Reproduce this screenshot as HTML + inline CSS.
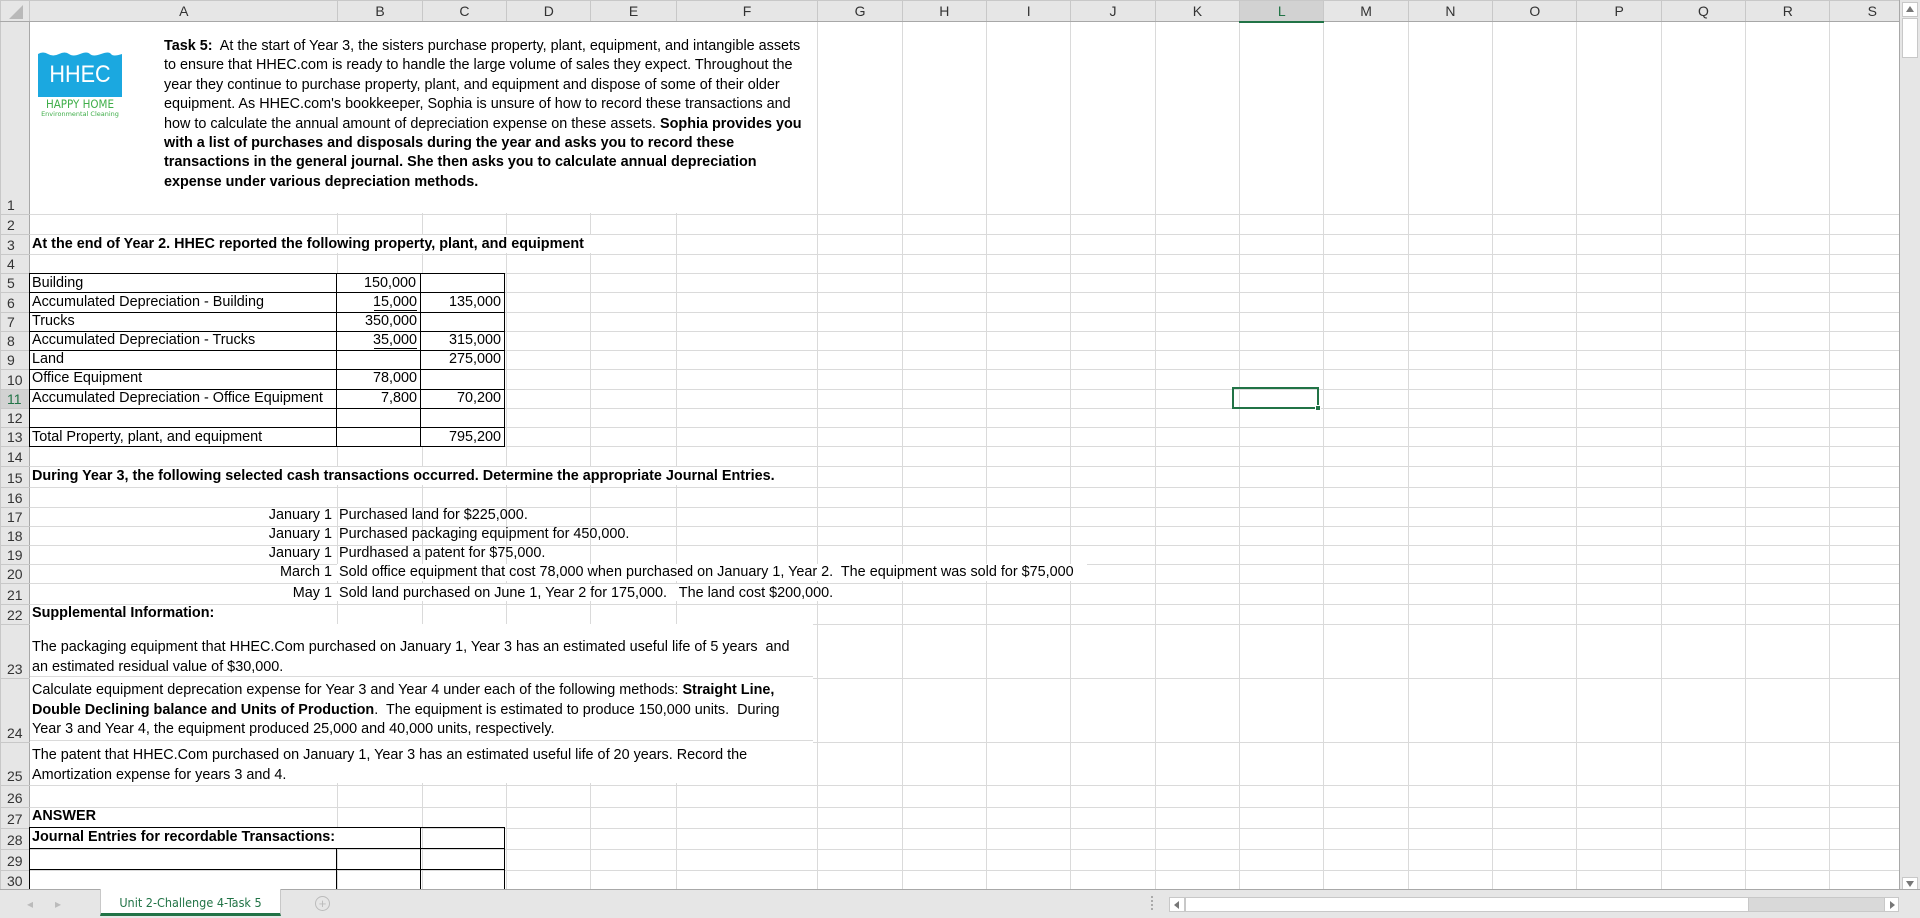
<!DOCTYPE html>
<html><head><meta charset="utf-8"><style>
*{margin:0;padding:0;box-sizing:border-box}
body{width:1920px;height:918px;overflow:hidden;background:#fff;font-family:"Liberation Sans",Arial,sans-serif;position:relative}
table.g{position:absolute;left:0;top:0;border-collapse:collapse;table-layout:fixed;width:1915px}
table.g td{border:1px solid #dadada;padding:0}
table.g tr.h td{background:#e6e6e6;border-color:#c8c8c8;border-bottom:1px solid #a8a8a8;text-align:center;font-size:14px;color:#333;vertical-align:middle}
table.g td.rh{background:#e6e6e6;border-color:#c8c8c8;border-right:1px solid #a8a8a8;font-size:14px;color:#333;text-align:left;padding-left:6px;vertical-align:bottom;line-height:17px}
.t{position:absolute;font-size:14.4px;line-height:19px;white-space:nowrap;color:#000}
.b{font-weight:bold}
.bx{position:absolute;border:1px solid #000}
.r{text-align:right}
</style></head><body>
<table class="g">
<colgroup><col style="width:29px"><col style="width:307px"><col style="width:84px"><col style="width:84px"><col style="width:84px"><col style="width:85px"><col style="width:141px"><col style="width:84px"><col style="width:84px"><col style="width:84px"><col style="width:84px"><col style="width:84px"><col style="width:84px"><col style="width:84px"><col style="width:84px"><col style="width:84px"><col style="width:84px"><col style="width:84px"><col style="width:84px"><col style="width:84px"></colgroup>
<tr class="h" style="height:21px"><td style="background:#e6e6e6"></td><td>A</td><td>B</td><td>C</td><td>D</td><td>E</td><td>F</td><td>G</td><td>H</td><td>I</td><td>J</td><td>K</td><td style="background:#d2d2d2;color:#217346;border-bottom:2px solid #217346">L</td><td>M</td><td>N</td><td>O</td><td>P</td><td>Q</td><td>R</td><td>S</td></tr>
<tr style="height:193px"><td class="rh">1</td><td></td><td></td><td></td><td></td><td></td><td></td><td></td><td></td><td></td><td></td><td></td><td></td><td></td><td></td><td></td><td></td><td></td><td></td><td></td></tr>
<tr style="height:20px"><td class="rh">2</td><td></td><td></td><td></td><td></td><td></td><td></td><td></td><td></td><td></td><td></td><td></td><td></td><td></td><td></td><td></td><td></td><td></td><td></td><td></td></tr>
<tr style="height:20px"><td class="rh">3</td><td></td><td></td><td></td><td></td><td></td><td></td><td></td><td></td><td></td><td></td><td></td><td></td><td></td><td></td><td></td><td></td><td></td><td></td><td></td></tr>
<tr style="height:19px"><td class="rh">4</td><td></td><td></td><td></td><td></td><td></td><td></td><td></td><td></td><td></td><td></td><td></td><td></td><td></td><td></td><td></td><td></td><td></td><td></td><td></td></tr>
<tr style="height:19px"><td class="rh">5</td><td></td><td></td><td></td><td></td><td></td><td></td><td></td><td></td><td></td><td></td><td></td><td></td><td></td><td></td><td></td><td></td><td></td><td></td><td></td></tr>
<tr style="height:20px"><td class="rh">6</td><td></td><td></td><td></td><td></td><td></td><td></td><td></td><td></td><td></td><td></td><td></td><td></td><td></td><td></td><td></td><td></td><td></td><td></td><td></td></tr>
<tr style="height:19px"><td class="rh">7</td><td></td><td></td><td></td><td></td><td></td><td></td><td></td><td></td><td></td><td></td><td></td><td></td><td></td><td></td><td></td><td></td><td></td><td></td><td></td></tr>
<tr style="height:19px"><td class="rh">8</td><td></td><td></td><td></td><td></td><td></td><td></td><td></td><td></td><td></td><td></td><td></td><td></td><td></td><td></td><td></td><td></td><td></td><td></td><td></td></tr>
<tr style="height:19px"><td class="rh">9</td><td></td><td></td><td></td><td></td><td></td><td></td><td></td><td></td><td></td><td></td><td></td><td></td><td></td><td></td><td></td><td></td><td></td><td></td><td></td></tr>
<tr style="height:20px"><td class="rh">10</td><td></td><td></td><td></td><td></td><td></td><td></td><td></td><td></td><td></td><td></td><td></td><td></td><td></td><td></td><td></td><td></td><td></td><td></td><td></td></tr>
<tr style="height:19px"><td class="rh" style="background:#d2d2d2;color:#217346;border-right:2px solid #217346">11</td><td></td><td></td><td></td><td></td><td></td><td></td><td></td><td></td><td></td><td></td><td></td><td></td><td></td><td></td><td></td><td></td><td></td><td></td><td></td></tr>
<tr style="height:19px"><td class="rh">12</td><td></td><td></td><td></td><td></td><td></td><td></td><td></td><td></td><td></td><td></td><td></td><td></td><td></td><td></td><td></td><td></td><td></td><td></td><td></td></tr>
<tr style="height:19px"><td class="rh">13</td><td></td><td></td><td></td><td></td><td></td><td></td><td></td><td></td><td></td><td></td><td></td><td></td><td></td><td></td><td></td><td></td><td></td><td></td><td></td></tr>
<tr style="height:20px"><td class="rh">14</td><td></td><td></td><td></td><td></td><td></td><td></td><td></td><td></td><td></td><td></td><td></td><td></td><td></td><td></td><td></td><td></td><td></td><td></td><td></td></tr>
<tr style="height:21px"><td class="rh">15</td><td></td><td></td><td></td><td></td><td></td><td></td><td></td><td></td><td></td><td></td><td></td><td></td><td></td><td></td><td></td><td></td><td></td><td></td><td></td></tr>
<tr style="height:20px"><td class="rh">16</td><td></td><td></td><td></td><td></td><td></td><td></td><td></td><td></td><td></td><td></td><td></td><td></td><td></td><td></td><td></td><td></td><td></td><td></td><td></td></tr>
<tr style="height:19px"><td class="rh">17</td><td></td><td></td><td></td><td></td><td></td><td></td><td></td><td></td><td></td><td></td><td></td><td></td><td></td><td></td><td></td><td></td><td></td><td></td><td></td></tr>
<tr style="height:19px"><td class="rh">18</td><td></td><td></td><td></td><td></td><td></td><td></td><td></td><td></td><td></td><td></td><td></td><td></td><td></td><td></td><td></td><td></td><td></td><td></td><td></td></tr>
<tr style="height:19px"><td class="rh">19</td><td></td><td></td><td></td><td></td><td></td><td></td><td></td><td></td><td></td><td></td><td></td><td></td><td></td><td></td><td></td><td></td><td></td><td></td><td></td></tr>
<tr style="height:19px"><td class="rh">20</td><td></td><td></td><td></td><td></td><td></td><td></td><td></td><td></td><td></td><td></td><td></td><td></td><td></td><td></td><td></td><td></td><td></td><td></td><td></td></tr>
<tr style="height:21px"><td class="rh">21</td><td></td><td></td><td></td><td></td><td></td><td></td><td></td><td></td><td></td><td></td><td></td><td></td><td></td><td></td><td></td><td></td><td></td><td></td><td></td></tr>
<tr style="height:20px"><td class="rh">22</td><td></td><td></td><td></td><td></td><td></td><td></td><td></td><td></td><td></td><td></td><td></td><td></td><td></td><td></td><td></td><td></td><td></td><td></td><td></td></tr>
<tr style="height:54px"><td class="rh">23</td><td></td><td></td><td></td><td></td><td></td><td></td><td></td><td></td><td></td><td></td><td></td><td></td><td></td><td></td><td></td><td></td><td></td><td></td><td></td></tr>
<tr style="height:64px"><td class="rh">24</td><td></td><td></td><td></td><td></td><td></td><td></td><td></td><td></td><td></td><td></td><td></td><td></td><td></td><td></td><td></td><td></td><td></td><td></td><td></td></tr>
<tr style="height:43px"><td class="rh">25</td><td></td><td></td><td></td><td></td><td></td><td></td><td></td><td></td><td></td><td></td><td></td><td></td><td></td><td></td><td></td><td></td><td></td><td></td><td></td></tr>
<tr style="height:22px"><td class="rh">26</td><td></td><td></td><td></td><td></td><td></td><td></td><td></td><td></td><td></td><td></td><td></td><td></td><td></td><td></td><td></td><td></td><td></td><td></td><td></td></tr>
<tr style="height:21px"><td class="rh">27</td><td></td><td></td><td></td><td></td><td></td><td></td><td></td><td></td><td></td><td></td><td></td><td></td><td></td><td></td><td></td><td></td><td></td><td></td><td></td></tr>
<tr style="height:21px"><td class="rh">28</td><td></td><td></td><td></td><td></td><td></td><td></td><td></td><td></td><td></td><td></td><td></td><td></td><td></td><td></td><td></td><td></td><td></td><td></td><td></td></tr>
<tr style="height:21px"><td class="rh">29</td><td></td><td></td><td></td><td></td><td></td><td></td><td></td><td></td><td></td><td></td><td></td><td></td><td></td><td></td><td></td><td></td><td></td><td></td><td></td></tr>
<tr style="height:20px"><td class="rh">30</td><td></td><td></td><td></td><td></td><td></td><td></td><td></td><td></td><td></td><td></td><td></td><td></td><td></td><td></td><td></td><td></td><td></td><td></td><td></td></tr>
</table>
<svg style="position:absolute;left:8px;top:4px" width="16" height="16"><polygon points="15,1 15,15 1,15" fill="#b9b9b9"/></svg>

<div style="position:absolute;left:30px;top:22px;width:783px;height:191px;background:#fff"></div>

<svg style="position:absolute;left:38px;top:50px" width="84" height="47"><path d="M0 4 Q5 1 10 4 T21 4 T31 4 T42 4 T52 4 T63 4 T73 4 T84 4 V47 H0 Z" fill="#1ba8e0"/></svg>
<div style="position:absolute;left:38px;top:61px;width:84px;text-align:center;color:#fff;font-size:24px;line-height:28px;font-family:'Liberation Sans',sans-serif;transform:scaleX(0.9)">HHEC</div>
<div style="position:absolute;left:36px;top:98px;width:88px;text-align:center;color:#3fae49;font-size:11.5px;line-height:12px;font-family:'DejaVu Sans Condensed','Liberation Sans',sans-serif">HAPPY HOME</div>
<div style="position:absolute;left:36px;top:110px;width:88px;text-align:center;color:#3fae49;font-size:6.5px;line-height:8px;font-family:'DejaVu Sans','Liberation Sans',sans-serif">Environmental Cleaning</div>

<div class="t" style="left:164px;top:37px;line-height:19.4px;font-size:14.4px">
<span class="b">Task 5:</span>&nbsp; At the start of Year 3, the sisters purchase property, plant, equipment, and intangible assets<br>
to ensure that HHEC.com is ready to handle the large volume of sales they expect. Throughout the<br>
year they continue to purchase property, plant, and equipment and dispose of some of their older<br>
equipment. As HHEC.com's bookkeeper, Sophia is unsure of how to record these transactions and<br>
how to calculate the annual amount of depreciation expense on these assets. <span class="b">Sophia provides you</span><br>
<span class="b">with a list of purchases and disposals during the year and asks you to record these</span><br>
<span class="b">transactions in the general journal. She then asks you to calculate annual depreciation</span><br>
<span class="b">expense under various depreciation methods.</span></div>

<div style="position:absolute;left:30px;top:235px;width:620px;height:18px;background:#fff"></div>
<div class="t b" style="left:32px;top:235px">At the end of Year 2. HHEC reported the following property, plant, and equipment</div>

<div style="position:absolute;left:29px;top:273px;width:476px;height:174px;border:1px solid #000;background:#fff"></div>
<div style="position:absolute;left:336px;top:273px;width:1px;height:174px;background:#000"></div>
<div style="position:absolute;left:420px;top:273px;width:1px;height:174px;background:#000"></div>
<div style="position:absolute;left:29px;top:292px;width:476px;height:1px;background:#000"></div>
<div style="position:absolute;left:29px;top:312px;width:476px;height:1px;background:#000"></div>
<div style="position:absolute;left:29px;top:331px;width:476px;height:1px;background:#000"></div>
<div style="position:absolute;left:29px;top:350px;width:476px;height:1px;background:#000"></div>
<div style="position:absolute;left:29px;top:369px;width:476px;height:1px;background:#000"></div>
<div style="position:absolute;left:29px;top:389px;width:476px;height:1px;background:#000"></div>
<div style="position:absolute;left:29px;top:408px;width:476px;height:1px;background:#000"></div>
<div style="position:absolute;left:29px;top:427px;width:476px;height:1px;background:#000"></div>

<div class="t" style="left:32px;top:274px">Building</div>
<div class="t" style="left:32px;top:293px">Accumulated Depreciation - Building</div>
<div class="t" style="left:32px;top:312px">Trucks</div>
<div class="t" style="left:32px;top:331px">Accumulated Depreciation - Trucks</div>
<div class="t" style="left:32px;top:350px">Land</div>
<div class="t" style="left:32px;top:369px">Office Equipment</div>
<div class="t" style="left:32px;top:389px">Accumulated Depreciation - Office Equipment</div>
<div class="t" style="left:32px;top:428px">Total Property, plant, and equipment</div>

<div class="t r" style="left:336px;width:80px;top:274px">150,000</div>
<div class="t r" style="left:336px;width:81px;top:293px">15,000</div>
<div style="position:absolute;left:374px;top:310px;width:43px;height:1px;background:#000"></div>
<div class="t r" style="left:336px;width:81px;top:312px">350,000</div>
<div class="t r" style="left:336px;width:81px;top:331px">35,000</div>
<div style="position:absolute;left:374px;top:348px;width:43px;height:1px;background:#000"></div>
<div class="t r" style="left:336px;width:81px;top:369px">78,000</div>
<div class="t r" style="left:336px;width:81px;top:389px">7,800</div>
<div class="t r" style="left:420px;width:81px;top:293px">135,000</div>
<div class="t r" style="left:420px;width:81px;top:331px">315,000</div>
<div class="t r" style="left:420px;width:81px;top:350px">275,000</div>
<div class="t r" style="left:420px;width:81px;top:389px">70,200</div>
<div class="t r" style="left:420px;width:81px;top:428px">795,200</div>

<div style="position:absolute;left:30px;top:467px;width:780px;height:18px;background:#fff"></div>
<div class="t b" style="left:32px;top:467px">During Year 3, the following selected cash transactions occurred. Determine the appropriate Journal Entries.</div>

<div class="t r" style="left:30px;width:302px;top:506px">January 1</div>
<div class="t r" style="left:30px;width:302px;top:525px">January 1</div>
<div class="t r" style="left:30px;width:302px;top:544px">January 1</div>
<div class="t r" style="left:30px;width:302px;top:563px">March 1</div>
<div class="t r" style="left:30px;width:302px;top:584px">May 1</div>
<div class="t" style="left:339px;top:506px">Purchased land for $225,000.</div>
<div class="t" style="left:339px;top:525px">Purchased packaging equipment for 450,000.</div>
<div class="t" style="left:339px;top:544px">Purdhased a patent for $75,000.</div>
<div style="position:absolute;left:337px;top:564px;width:750px;height:17px;background:#fff"></div>
<div class="t" style="left:339px;top:563px">Sold office equipment that cost 78,000 when purchased on January 1, Year 2.&nbsp; The equipment was sold for $75,000</div>
<div style="position:absolute;left:337px;top:584px;width:520px;height:17px;background:#fff"></div>
<div class="t" style="left:339px;top:584px">Sold land purchased on June 1, Year 2 for 175,000.&nbsp;&nbsp; The land cost $200,000.</div>

<div class="t b" style="left:32px;top:604px">Supplemental Information:</div>

<div style="position:absolute;left:30px;top:624px;width:783px;height:159px;background:#fff"></div>
<div style="position:absolute;left:30px;top:676px;width:783px;height:1px;background:#dadada"></div>
<div style="position:absolute;left:30px;top:740px;width:783px;height:1px;background:#dadada"></div>
<div class="t" style="left:32px;top:638px;line-height:19.5px">The packaging equipment that HHEC.Com purchased on January 1, Year 3 has an estimated useful life of 5 years&nbsp; and<br>an estimated residual value of $30,000.</div>
<div class="t" style="left:32px;top:681px;line-height:19.6px">Calculate equipment deprecation expense for Year 3 and Year 4 under each of the following methods: <b>Straight Line,</b><br><b>Double Declining balance and Units of Production</b>.&nbsp; The equipment is estimated to produce 150,000 units.&nbsp; During<br>Year 3 and Year 4, the equipment produced 25,000 and 40,000 units, respectively.</div>
<div class="t" style="left:32px;top:746px;line-height:19.5px">The patent that HHEC.Com purchased on January 1, Year 3 has an estimated useful life of 20 years. Record the<br>Amortization expense for years 3 and 4.</div>

<div class="t b" style="left:32px;top:807px">ANSWER</div>
<div class="bx" style="left:29px;top:827px;width:392px;height:22px;background:#fff"></div>
<div class="bx" style="left:420px;top:827px;width:85px;height:22px"></div>
<div class="t b" style="left:32px;top:828px">Journal Entries for recordable Transactions:</div>
<div class="bx" style="left:29px;top:848px;width:308px;height:22px"></div>
<div class="bx" style="left:336px;top:848px;width:85px;height:22px"></div>
<div class="bx" style="left:420px;top:848px;width:85px;height:22px"></div>
<div class="bx" style="left:29px;top:869px;width:308px;height:21px"></div>
<div class="bx" style="left:336px;top:869px;width:85px;height:21px"></div>
<div class="bx" style="left:420px;top:869px;width:85px;height:21px"></div>

<div style="position:absolute;left:1232px;top:387px;width:87px;height:22px;border:2px solid #217346"></div>
<div style="position:absolute;left:1315px;top:405px;width:6px;height:6px;background:#217346;border:1px solid #fff"></div>

<div style="position:absolute;left:1899px;top:0;width:21px;height:889px;background:#e6e6e6;border-left:1px solid #a8a8a8"></div>
<div style="position:absolute;left:1902px;top:2px;width:16px;height:15px;background:#fff;border:1px solid #c8c8c8"></div>
<svg style="position:absolute;left:1906px;top:6px" width="8" height="6"><polygon points="4,0 8,6 0,6" fill="#777"/></svg>
<div style="position:absolute;left:1902px;top:18px;width:16px;height:40px;background:#fff;border:1px solid #c8c8c8"></div>
<div style="position:absolute;left:1902px;top:877px;width:16px;height:14px;background:#fff;border:1px solid #c8c8c8"></div>
<svg style="position:absolute;left:1906px;top:881px" width="8" height="6"><polygon points="0,0 8,0 4,6" fill="#777"/></svg>

<div style="position:absolute;left:0;top:889px;width:1920px;height:29px;background:#e6e6e6;border-top:1px solid #a8a8a8"></div>
<div style="position:absolute;left:27px;top:897px;color:#bbb;font-size:12px">&#9666;</div>
<div style="position:absolute;left:55px;top:897px;color:#bbb;font-size:12px">&#9656;</div>
<div style="position:absolute;left:100px;top:889px;width:181px;height:27px;background:#fff;border-bottom:3px solid #217346;border-left:1px solid #c8c8c8;border-right:1px solid #c8c8c8"></div>
<div style="position:absolute;left:100px;top:895px;width:181px;text-align:center;color:#217346;font-size:12.5px;font-family:'DejaVu Sans Condensed','Liberation Sans',sans-serif">Unit 2-Challenge 4-Task 5</div>
<div style="position:absolute;left:315px;top:896px;width:15px;height:15px;border:1px solid #bbb;border-radius:50%;color:#bbb;font-size:13px;line-height:13px;text-align:center">+</div>
<div style="position:absolute;left:1151px;top:896px;width:2px;height:14px;border-left:2px dotted #aaa"></div>
<div style="position:absolute;left:1169px;top:897px;width:730px;height:15px;background:#d9d9d9;border:1px solid #c8c8c8"></div>
<div style="position:absolute;left:1169px;top:897px;width:16px;height:15px;background:#fff;border:1px solid #c8c8c8"></div>
<div style="position:absolute;left:1185px;top:897px;width:564px;height:15px;background:#fff;border:1px solid #c8c8c8"></div>
<div style="position:absolute;left:1884px;top:897px;width:15px;height:15px;background:#fff;border:1px solid #c8c8c8"></div>
<svg style="position:absolute;left:1174px;top:901px" width="5" height="8"><polygon points="5,0 5,8 0,4" fill="#777"/></svg>
<svg style="position:absolute;left:1890px;top:901px" width="5" height="8"><polygon points="0,0 5,4 0,8" fill="#777"/></svg>
</body></html>
